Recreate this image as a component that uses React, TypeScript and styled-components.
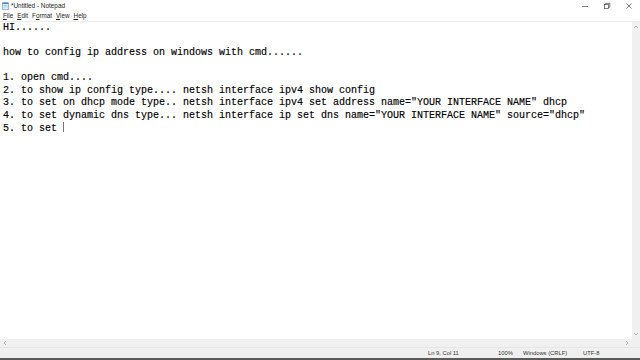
import React from "react";
import styled, { createGlobalStyle } from "styled-components";

const Global = createGlobalStyle`
  html, body { margin: 0; padding: 0; background: #ffffff; }
  #root { width: 640px; height: 360px; overflow: hidden; }
`;

const Window = styled.div`
  width: 640px;
  height: 360px;
  display: flex;
  flex-direction: column;
  background: #fff;
  font-family: "Liberation Sans", "Noto Sans", sans-serif;
`;

const TitleBar = styled.div`
  height: 11px;
  display: flex;
  align-items: center;
  padding-left: 2px;
  gap: 2px;
  background: #fff;
`;

const Title = styled.div`
  flex: 1;
  font-size: 6.4px;
  color: #222;
  line-height: 11px;
`;

const Controls = styled.div`
  display: flex;
  height: 11px;
`;

const ControlButton = styled.div`
  width: 22px;
  height: 11px;
  display: flex;
  align-items: center;
  justify-content: center;
`;

const MenuBar = styled.div`
  height: 10px;
  display: flex;
  align-items: center;
  padding-left: 3px;
  border-bottom: 1px solid #ececec;
`;

const MenuItem = styled.span`
  font-size: 6.3px;
  color: #222;
  margin-right: 4px;
  line-height: 10px;
`;

const Middle = styled.div`
  flex: 1;
  display: flex;
  min-height: 0;
`;

const Editor = styled.div`
  flex: 1;
  padding: 0 0 0 3px;
  font-family: "Liberation Mono", "DejaVu Sans Mono", monospace;
  font-size: 10px;
  line-height: 12.5px;
  color: #000;
  white-space: pre;
  overflow: hidden;
  -webkit-text-stroke: 0.15px #000;
`;

const Line = styled.div`
  height: 12.5px;
`;

const Caret = styled.span`
  display: inline-block;
  width: 1px;
  height: 10px;
  background: #777;
  vertical-align: -1px;
`;

const VScroll = styled.div`
  width: 8px;
  background: #f0f0f0;
  display: flex;
  flex-direction: column;
  justify-content: space-between;
  align-items: center;
  padding: 2px 0;
`;

const HRow = styled.div`
  height: 8px;
  display: flex;
`;

const HScroll = styled.div`
  flex: 1;
  background: #f0f0f0;
  display: flex;
  justify-content: space-between;
  align-items: center;
  padding: 0 2px;
`;

const Corner = styled.div`
  width: 8px;
  background: #f0f0f0;
`;

const StatusBar = styled.div`
  height: 10px;
  background: #f0f0f0;
  border-top: 1px solid #e6e6e6;
  display: flex;
  align-items: center;
  font-size: 5.8px;
  color: #333;
`;

const StatusCell = styled.div<{ $w: number }>`
  width: ${(p) => p.$w}px;
  line-height: 10px;
  white-space: nowrap;
`;

const BottomEdge = styled.div`
  height: 2px;
  background: #5a5a5a;
`;

const Arrow = ({ dir }: { dir: "up" | "down" | "left" | "right" }) => {
  const pts: Record<string, string> = {
    up: "1,4 3,2 5,4",
    down: "1,2 3,4 5,2",
    left: "4,1 2,3 4,5",
    right: "2,1 4,3 2,5",
  };
  return (
    <svg width="6" height="6" viewBox="0 0 6 6">
      <polyline points={pts[dir]} fill="none" stroke="#a0a0a0" strokeWidth="0.8" />
    </svg>
  );
};

const NotepadIcon = () => (
  <svg width="7" height="8" viewBox="0 0 7 8">
    <rect x="0.5" y="1" width="6" height="6.5" fill="#dfeef9" stroke="#5b8fc4" strokeWidth="0.6" />
    <rect x="0.5" y="0.5" width="6" height="1.4" fill="#3d7cc2" />
    <line x1="1.5" y1="3.5" x2="5.5" y2="3.5" stroke="#7aa6d4" strokeWidth="0.5" />
    <line x1="1.5" y1="5" x2="5.5" y2="5" stroke="#7aa6d4" strokeWidth="0.5" />
  </svg>
);

const lines = [
  "HI......",
  "",
  "how to config ip address on windows with cmd......",
  "",
  "1. open cmd....",
  "2. to show ip config type.... netsh interface ipv4 show config",
  '3. to set on dhcp mode type.. netsh interface ipv4 set address name="YOUR INTERFACE NAME" dhcp',
  '4. to set dynamic dns type... netsh interface ip set dns name="YOUR INTERFACE NAME" source="dhcp"',
];

export default function App() {
  return (
    <>
      <Global />
      <Window>
        <TitleBar>
          <NotepadIcon />
          <Title>*Untitled - Notepad</Title>
          <Controls>
            <ControlButton>
              <svg width="8" height="8" viewBox="0 0 8 8">
                <line x1="1" y1="4.5" x2="7" y2="4.5" stroke="#444" strokeWidth="0.7" />
              </svg>
            </ControlButton>
            <ControlButton>
              <svg width="8" height="8" viewBox="0 0 8 8">
                <rect x="1.5" y="2.5" width="4" height="4" fill="none" stroke="#444" strokeWidth="0.7" />
                <polyline points="2.8,2.5 2.8,1.3 6.8,1.3 6.8,5.3 5.5,5.3" fill="none" stroke="#444" strokeWidth="0.7" />
              </svg>
            </ControlButton>
            <ControlButton>
              <svg width="8" height="8" viewBox="0 0 8 8">
                <line x1="1.5" y1="1.5" x2="6.5" y2="6.5" stroke="#444" strokeWidth="0.7" />
                <line x1="6.5" y1="1.5" x2="1.5" y2="6.5" stroke="#444" strokeWidth="0.7" />
              </svg>
            </ControlButton>
          </Controls>
        </TitleBar>
        <MenuBar>
          <MenuItem><u>F</u>ile</MenuItem>
          <MenuItem><u>E</u>dit</MenuItem>
          <MenuItem>F<u>o</u>rmat</MenuItem>
          <MenuItem><u>V</u>iew</MenuItem>
          <MenuItem><u>H</u>elp</MenuItem>
        </MenuBar>
        <Middle>
          <Editor>
            {lines.map((l, i) => (
              <Line key={i}>{l}</Line>
            ))}
            <Line>
              {"5. to set "}
              <Caret />
            </Line>
          </Editor>
          <VScroll>
            <Arrow dir="up" />
            <Arrow dir="down" />
          </VScroll>
        </Middle>
        <HRow>
          <HScroll>
            <Arrow dir="left" />
            <Arrow dir="right" />
          </HScroll>
          <Corner />
        </HRow>
        <StatusBar>
          <StatusCell $w={428} />
          <StatusCell $w={70}>Ln 9, Col 11</StatusCell>
          <StatusCell $w={25}>100%</StatusCell>
          <StatusCell $w={60}>Windows (CRLF)</StatusCell>
          <StatusCell $w={40}>UTF-8</StatusCell>
        </StatusBar>
        <BottomEdge />
      </Window>
    </>
  );
}
